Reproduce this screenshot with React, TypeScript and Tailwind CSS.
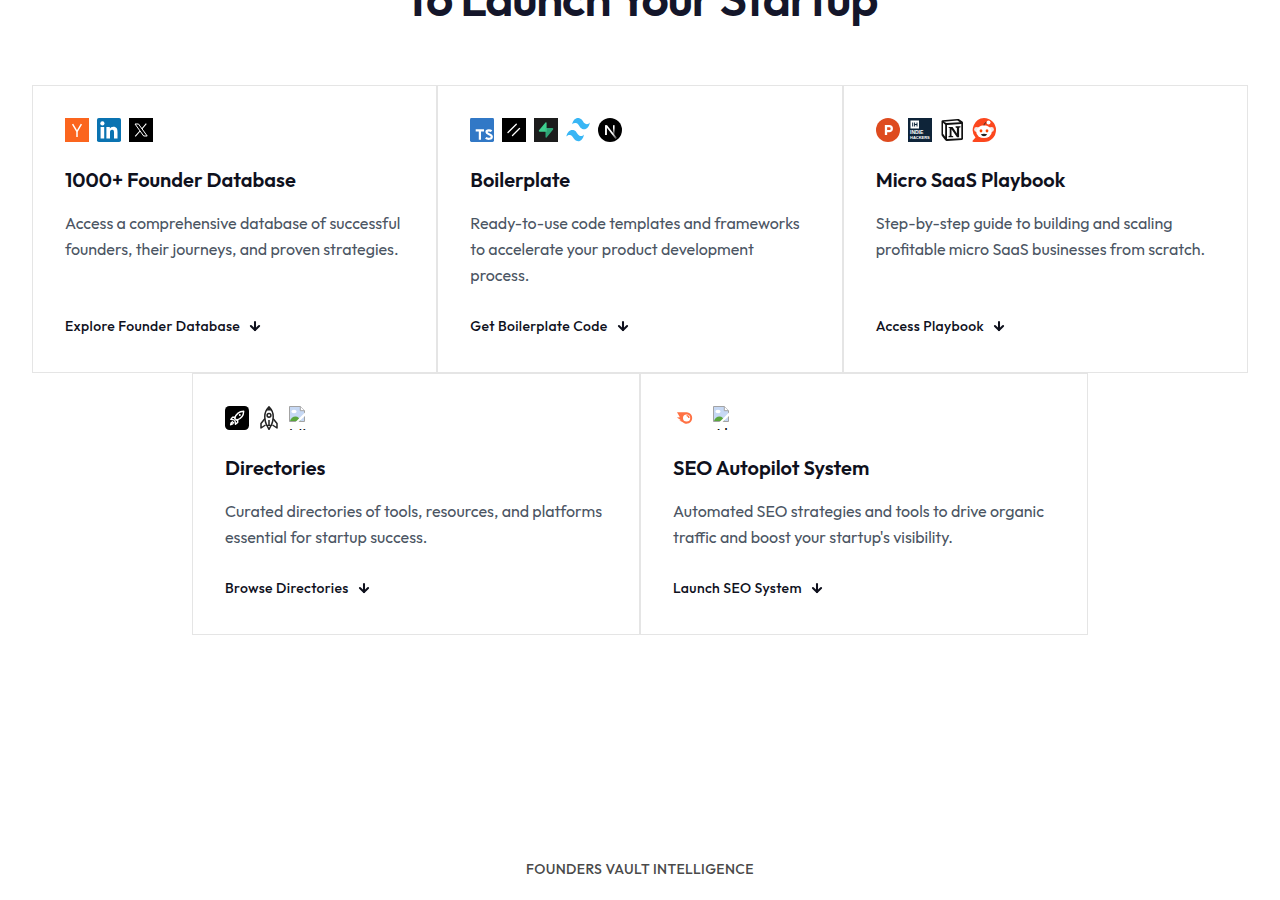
import type { ReactNode } from "react";
import { ArrowDown } from "lucide-react";

function YCombinator() {
  return (
    <svg viewBox="0 0 24 24" className="size-6" role="img" aria-label="Y Combinator">
      <rect width="24" height="24" fill="#fb651e" />
      <path d="M7.6 6.2 12 13.6 16.4 6.2M12 13.2V19" fill="none" stroke="#fff" strokeWidth="1.5" />
    </svg>
  );
}

function LinkedIn() {
  return (
    <svg viewBox="0 0 24 24" className="size-6" role="img" aria-label="LinkedIn">
      <rect width="24" height="24" rx="1.8" fill="#0a73b1" />
      <circle cx="5.4" cy="5.4" r="2.1" fill="#fff" />
      <path
        d="M3.6 9h3.6v11.4H3.6zM9.4 9h3.4v1.6c.6-1 1.8-1.9 3.5-1.9 3.6 0 4.2 2.4 4.2 5.4v6.3H17v-5.6c0-1.3 0-3-1.9-3s-2.1 1.4-2.1 2.9v5.7H9.4z"
        fill="#fff"
      />
    </svg>
  );
}

function XLogo() {
  return (
    <svg viewBox="0 0 24 24" className="size-6" role="img" aria-label="X">
      <rect width="24" height="24" fill="#000" />
      <path d="M6 6h3.5L18.2 18h-3.5z" fill="none" stroke="#fff" strokeWidth="1" />
      <path d="M17.3 5.7 12.8 11M11 13 6.2 18.4" fill="none" stroke="#fff" strokeWidth="1.1" />
    </svg>
  );
}

function TypeScript() {
  return (
    <svg viewBox="0 0 24 24" className="size-6" role="img" aria-label="TypeScript">
      <rect width="24" height="24" rx="1.4" fill="#3178c6" />
      <path d="M5.7 12.4h8.3M9.9 12.4v9.4" fill="none" stroke="#fff" strokeWidth="2.2" />
      <path
        d="M21.6 13.2c-1.1-.9-5.1-1.5-5.1.9 0 2.5 5.3 1.9 5.3 4.6 0 2.6-4.3 2.5-6.1 1.2"
        fill="none"
        stroke="#fff"
        strokeWidth="2.2"
      />
    </svg>
  );
}

function Shadcn() {
  return (
    <svg viewBox="0 0 24 24" className="size-6" role="img" aria-label="shadcn/ui">
      <rect width="24" height="24" fill="#000" />
      <path d="M6 14.500 14.300 6.200M10.500 17.500 17.500 10.500" fill="none" stroke="#fff" strokeWidth="1.3" strokeLinecap="round" />
    </svg>
  );
}

function Supabase() {
  return (
    <svg viewBox="0 0 24 24" className="size-6" role="img" aria-label="Supabase">
      <rect width="24" height="24" fill="#1c1c1c" />
      <path d="M12.6 4.8v8.9H5.7c-.8 0-1.2-.9-.7-1.5l6.5-7.8c.4-.5 1.1-.2 1.1.4z" fill="#3ecf8e" />
      <path d="M11.5 19V10h6.9c.8 0 1.2.9.7 1.5l-6.5 7.9c-.4.5-1.1.2-1.1-.4z" fill="#2ea476" />
      <path d="M11.5 10h1.1v3.7h-1.1z" fill="#3ecf8e" />
    </svg>
  );
}

function TailwindMark() {
  return (
    <svg viewBox="0 0 24 24" className="size-6" role="img" aria-label="Tailwind CSS">
      <path
        d="M6.2 6.3C7.2 1 10.600-.9 14 .4c2.700 1 3 4.200 5.400 5.400 1.700.8 3.300.2 4.500-1.300-1 5.300-4.200 7.800-7.600 6.400-2.900-1.100-3.100-4.500-5.500-5.600-1.800-.8-3.300-.4-4.600 1zM.3 18.600c1-5.300 4.400-7.600 7.800-6.300 2.700 1 3 4.200 5.400 5.400 1.700.8 3.300.2 4.500-1.300-1 5.300-4.200 7.800-7.600 6.400-2.900-1.100-3.100-4.500-5.500-5.500-1.800-.8-3.300-.3-4.600 1.300z"
        fill="#38b6f5"
      />
    </svg>
  );
}

function NextMark() {
  return (
    <svg viewBox="0 0 24 24" className="size-6" role="img" aria-label="Next.js">
      <defs>
        <linearGradient id="next-fade" x1="0" y1="0" x2="0" y2="1">
          <stop offset="0.3" stopColor="#fff" />
          <stop offset="1" stopColor="#fff" stopOpacity="0.1" />
        </linearGradient>
        <linearGradient id="next-stroke" x1="0" y1="0" x2="1" y2="1">
          <stop offset="0.6" stopColor="#fff" />
          <stop offset="1" stopColor="#fff" stopOpacity="0.2" />
        </linearGradient>
      </defs>
      <circle cx="12" cy="12" r="12" fill="#000" />
      <path d="M7.2 17V7.2h1.900L19 20l-1.500 1L8.700 9.600V17z" fill="url(#next-stroke)" />
      <path d="M7.2 7.2h1.500V17H7.200z" fill="#fff" />
      <rect x="15" y="7.2" width="1.6" height="9.5" fill="url(#next-fade)" />
    </svg>
  );
}

function ProductHunt() {
  return (
    <svg viewBox="0 0 24 24" className="size-6" role="img" aria-label="Product Hunt">
      <circle cx="12" cy="12" r="12" fill="#de4b1f" />
      <path d="M10 17V8.200h3.300a2.500 2.500 0 0 1 0 5H10" fill="none" stroke="#fff" strokeWidth="2.3" />
    </svg>
  );
}

function IndieHackers() {
  return (
    <svg viewBox="0 0 24 24" className="size-6" role="img" aria-label="Indie Hackers">
      <rect width="24" height="24" fill="#0e2439" />
      <rect x="2.500" y="2.500" width="8.500" height="8" fill="#fff" />
      <path d="M4.700 4.500v4M6.600 4.500v4M9 4.500v4M6.600 6.500H9" stroke="#0e2439" strokeWidth="1" />
      <g fill="#fff" fontFamily="Liberation Sans, sans-serif" fontWeight="700">
        <text x="2" y="16" fontSize="5">INDIE</text>
        <text x="2" y="21" fontSize="4">HACKERS</text>
      </g>
    </svg>
  );
}

function Notion() {
  return (
    <svg viewBox="0 0 24 24" className="size-6" role="img" aria-label="Notion">
      <path
        d="M2.500 2.200 17.500 1c1-.1 1.300 0 2 .5l2.900 2c.4.300.6.600.6 1.200v15.700c0 .9-.4 1.400-1.300 1.500L7 22.900c-.8 0-1.200-.1-1.700-.7l-3.300-4.200c-.4-.5-.5-.9-.5-1.500V3.400c0-.6.2-1.100 1-1.200z"
        fill="#111"
      />
      <path d="m3.800 3.700 13.600-1.100 2.500 1.600L6.500 5.100z" fill="#fff" />
      <path d="M7 6.900 21.300 6v14.200L7 21.100z" fill="#fff" />
      <path d="M3 4.700 5.200 6.700v12.100l-2.200-3z" fill="#fff" />
      <path d="M8.600 8.900h4l4.300 6.600v-5.600l-1.300-.4V8.300h4.900v1l-1.400.5v9.500h-2.100l-5.500-8v6.500l1.700.5v1H8.500v-1l1.200-.5V10.100l-1.100-.3z" fill="#111" />
    </svg>
  );
}

function Reddit() {
  return (
    <svg viewBox="0 0 24 24" className="size-6" role="img" aria-label="Reddit">
      <path d="M12 0a12 12 0 1 1 0 24H1.500c-.9 0-1.300-1-.7-1.600l2.700-2.800A12 12 0 0 1 12 0z" fill="#fc471e" />
      <circle cx="4.500" cy="11.500" r="2.400" fill="#f3e9e8" />
      <circle cx="19.500" cy="11.500" r="2.400" fill="#f3e9e8" />
      <ellipse cx="12" cy="13.700" rx="7.800" ry="6.400" fill="#fff" />
      <path d="M12 7.500c0-2 1.500-3.200 3.500-3.300" fill="none" stroke="#222" strokeWidth=".8" />
      <circle cx="16.500" cy="4.600" r="2" fill="#fff" />
      <ellipse cx="9" cy="12.800" rx="1.400" ry="1.600" fill="#ff4500" />
      <ellipse cx="15" cy="12.800" rx="1.400" ry="1.600" fill="#ff4500" />
      <path d="M8.800 16.300q3.200-.9 6.400 0-1 2-3.200 2t-3.200-2z" fill="#222" />
    </svg>
  );
}

function RocketTile() {
  return (
    <svg viewBox="0 0 24 24" className="size-6" role="img" aria-label="Launch directory">
      <rect width="24" height="24" rx="4.500" fill="#000" />
      <g fill="none" stroke="#fff" strokeWidth="1.4" strokeLinejoin="round" strokeLinecap="round">
        <path d="M9.700 12.200c1.300-4 4.100-6.900 9-7-.1 4.900-3 7.700-7 9z" />
        <path d="M10 11.200H7.600L5.800 13.400l3.400.5M12.700 14v2.400l-2.200 1.800-.5-3.400" />
        <path d="M7.600 15.800c-1.300.3-1.900 1.400-2 2.900 1.500-.1 2.600-.7 2.900-2" />
      </g>
      <circle cx="14.800" cy="9.100" r="1" fill="#fff" />
    </svg>
  );
}

function RocketOutline() {
  return (
    <svg viewBox="0 0 24 24" className="size-6" role="img" aria-label="Startup directory">
      <g fill="#fff" stroke="#222" strokeWidth="1.5" strokeLinejoin="round">
        <path d="M8 12.500 4 17.500v4.500l4.500-3M16 12.500l4 5v4.500l-4.500-3" />
        <path d="M12 .8c3.300 3.400 4.400 7 4.200 10.500-.1 3-.8 5.700-1.900 8.200H9.700c-1.100-2.500-1.800-5.200-1.900-8.200C7.600 7.800 8.700 4.200 12 .8z" />
        <circle cx="12" cy="9.300" r="1.900" />
        <path d="M12 14v6M10.200 20l1.800 3.400 1.800-3.400" />
      </g>
      <path d="M9.600 4.500 12 1l2.400 3.500z" fill="#222" />
    </svg>
  );
}

function Semrush() {
  return (
    <svg viewBox="0 0 24 24" className="size-6" role="img" aria-label="Semrush">
      <path d="M4 6.300h9.500a5.700 5.700 0 1 1-4.100 9.700l-3.100-1.500 1.700-.3-4.100-2.600 3-.3z" fill="#ff7143" />
      <circle cx="13.600" cy="12" r="3.600" fill="#fff" />
      <path d="M13.600 9.700a2.300 2.300 0 0 1 2.300 2.300" fill="none" stroke="#ff7143" strokeWidth="1.3" />
    </svg>
  );
}

function MissingImage({ label }: { label: string }) {
  return (
    <span className="block h-6 w-6 overflow-hidden text-base text-black">
      <svg viewBox="0 0 16 16" className="block size-4" aria-hidden="true">
        <path d="M.5.500h10.800l4.200 4.200v10.800H.5z" fill="#c6d8f4" stroke="#a3a3a3" />
        <path d="M1 1h10v4h4v2.500L7 15H1z" fill="#c6d8f4" />
        <path d="M11.300.500v4.200h4.200" fill="#fff" stroke="#a3a3a3" />
        <ellipse cx="5" cy="5.500" rx="2.600" ry="1.700" fill="#fff" />
        <path d="M1 15c.5-2.500 3-4.500 5.500-4.500S10.500 12 11.500 15z" fill="#5aa63c" />
        <path d="M16 6.500V10L9.500 16H6.500z" fill="#fff" />
      </svg>
      <span className="block">{label}</span>
    </span>
  );
}

type Card = { title: string; text: string; link: string; icons: ReactNode };

const topCards: Card[] = [
  {
    title: "1000+ Founder Database",
    text: "Access a comprehensive database of successful founders, their journeys, and proven strategies.",
    link: "Explore Founder Database",
    icons: <><YCombinator /><LinkedIn /><XLogo /></>,
  },
  {
    title: "Boilerplate",
    text: "Ready-to-use code templates and frameworks to accelerate your product development process.",
    link: "Get Boilerplate Code",
    icons: <><TypeScript /><Shadcn /><Supabase /><TailwindMark /><NextMark /></>,
  },
  {
    title: "Micro SaaS Playbook",
    text: "Step-by-step guide to building and scaling profitable micro SaaS businesses from scratch.",
    link: "Access Playbook",
    icons: <><ProductHunt /><IndieHackers /><Notion /><Reddit /></>,
  },
];

const bottomCards: Card[] = [
  {
    title: "Directories",
    text: "Curated directories of tools, resources, and platforms essential for startup success.",
    link: "Browse Directories",
    icons: <><RocketTile /><RocketOutline /><MissingImage label="Mi" /></>,
  },
  {
    title: "SEO Autopilot System",
    text: "Automated SEO strategies and tools to drive organic traffic and boost your startup's visibility.",
    link: "Launch SEO System",
    icons: <div className="flex gap-4"><Semrush /><MissingImage label="Ah" /></div>,
  },
];

function FeatureCard({ card }: { card: Card }) {
  return (
    <article className="flex flex-col border border-[#e5e5e5] p-8">
      <div className="mb-6 flex h-6 gap-2">{card.icons}</div>
      <h3 className="mb-4 text-xl font-semibold text-[#0f111d]">{card.title}</h3>
      <p className="mb-6 text-base leading-[26px] text-[#4b5563]">{card.text}</p>
      <a href="#" className="mt-auto flex h-7 items-center gap-2 text-sm font-medium tracking-wide text-[#0f111d]">
        {card.link}
        <ArrowDown className="size-3.5" strokeWidth={3.5} />
      </a>
    </article>
  );
}

export default function App() {
  return (
    <main className="overflow-hidden bg-white font-['Outfit','Lato',sans-serif]">
      <section className="px-8">
        <h2 className="-mt-8 mb-[57px] text-center text-5xl leading-[60px] font-semibold tracking-tight text-[#14162a]">
          To Launch Your Startup
        </h2>
        <div className="grid grid-cols-1 md:grid-cols-3">
          {topCards.map((card) => <FeatureCard key={card.title} card={card} />)}
        </div>
        <div className="mx-auto grid max-w-4xl grid-cols-1 md:grid-cols-2">
          {bottomCards.map((card) => <FeatureCard key={card.title} card={card} />)}
        </div>
      </section>
      <section className="px-8 pt-56 pb-5">
        <p className="text-center text-sm font-medium tracking-wide text-[#4a4a4a]">FOUNDERS VAULT INTELLIGENCE</p>
      </section>
    </main>
  );
}
